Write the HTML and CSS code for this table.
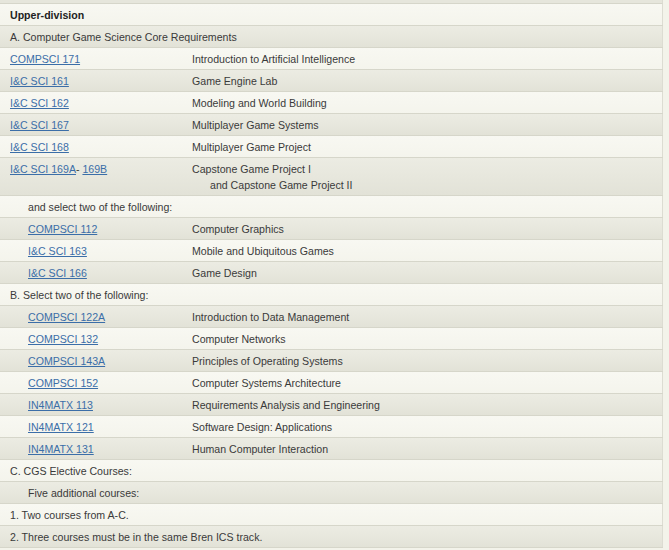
FILE: index.html
```html
<!DOCTYPE html>
<html>
<head>
<meta charset="utf-8">
<link rel="stylesheet" href="styles.css">
</head>
<body>
<div class="top-strip"></div>
<table class="req">
  <colgroup><col class="c1"><col class="c2"></colgroup>
  <tr class="odd"><td colspan="2" class="hdr">Upper-division</td></tr>
  <tr class="even"><td colspan="2">A. Computer Game Science Core Requirements</td></tr>
  <tr class="odd"><td class="code"><a href="#">COMPSCI 171</a></td><td class="title">Introduction to Artificial Intelligence</td></tr>
  <tr class="even"><td class="code"><a href="#">I&amp;C SCI 161</a></td><td class="title">Game Engine Lab</td></tr>
  <tr class="odd"><td class="code"><a href="#">I&amp;C SCI 162</a></td><td class="title">Modeling and World Building</td></tr>
  <tr class="even"><td class="code"><a href="#">I&amp;C SCI 167</a></td><td class="title">Multiplayer Game Systems</td></tr>
  <tr class="odd"><td class="code"><a href="#">I&amp;C SCI 168</a></td><td class="title">Multiplayer Game Project</td></tr>
  <tr class="even tall"><td class="code"><a href="#">I&amp;C SCI 169A</a>- <a href="#">169B</a></td><td class="title">Capstone Game Project I<br><span class="cont">and Capstone Game Project II</span></td></tr>
  <tr class="odd"><td colspan="2" class="ind">and select two of the following:</td></tr>
  <tr class="even"><td class="code ind"><a href="#">COMPSCI 112</a></td><td class="title">Computer Graphics</td></tr>
  <tr class="odd"><td class="code ind"><a href="#">I&amp;C SCI 163</a></td><td class="title">Mobile and Ubiquitous Games</td></tr>
  <tr class="even"><td class="code ind"><a href="#">I&amp;C SCI 166</a></td><td class="title">Game Design</td></tr>
  <tr class="odd"><td colspan="2">B. Select two of the following:</td></tr>
  <tr class="even"><td class="code ind"><a href="#">COMPSCI 122A</a></td><td class="title">Introduction to Data Management</td></tr>
  <tr class="odd"><td class="code ind"><a href="#">COMPSCI 132</a></td><td class="title">Computer Networks</td></tr>
  <tr class="even"><td class="code ind"><a href="#">COMPSCI 143A</a></td><td class="title">Principles of Operating Systems</td></tr>
  <tr class="odd"><td class="code ind"><a href="#">COMPSCI 152</a></td><td class="title">Computer Systems Architecture</td></tr>
  <tr class="even"><td class="code ind"><a href="#">IN4MATX 113</a></td><td class="title">Requirements Analysis and Engineering</td></tr>
  <tr class="odd"><td class="code ind"><a href="#">IN4MATX 121</a></td><td class="title">Software Design: Applications</td></tr>
  <tr class="even"><td class="code ind"><a href="#">IN4MATX 131</a></td><td class="title">Human Computer Interaction</td></tr>
  <tr class="odd"><td colspan="2">C. CGS Elective Courses:</td></tr>
  <tr class="even"><td colspan="2" class="ind">Five additional courses:</td></tr>
  <tr class="odd"><td colspan="2">1. Two courses from A-C.</td></tr>
  <tr class="even"><td colspan="2">2. Three courses must be in the same Bren ICS track.</td></tr>
</table>
</body>
</html>
```

FILE: styles.css
```css
html, body {
  margin: 0;
  padding: 0;
  background: #f3f3ea;
}
body {
  font-family: "Liberation Sans", Arial, sans-serif;
  font-size: 10.6px;
  color: #3a3a3a;
  width: 669px;
  height: 550px;
  overflow: hidden;
}
.top-strip {
  width: 663px;
  height: 4px;
  background: #e6e6dc;
  border-bottom: 1px solid #d6d6ca;
  box-sizing: border-box;
  border-right: 1px solid #dcdcd2;
}
.req {
  width: 663px;
  border-collapse: collapse;
  table-layout: fixed;
  border-right: 1px solid #dcdcd2;
}
.c1 {
  width: 192px;
}
.req td {
  padding: 3px 10px 2px 10px;
  line-height: 16px;
  height: 16px;
  border-bottom: 1px solid #d6d6ca;
  vertical-align: top;
  white-space: nowrap;
}
.req td.title {
  padding-left: 0;
}
.req td.ind {
  padding-left: 28px;
}
.odd {
  background: linear-gradient(#f8f8f2, #f4f4ec);
}
.even {
  background: linear-gradient(#ecece3, #e2e2d7);
}
.hdr {
  font-weight: bold;
  color: #222;
}
.req a {
  color: #3b6ea8;
  text-decoration: underline;
}
.cont {
  padding-left: 18px;
}
```
